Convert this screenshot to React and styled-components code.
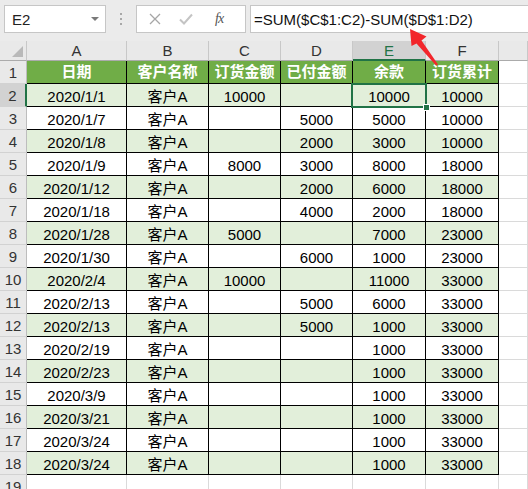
import React from "react";
import styled, { createGlobalStyle, css } from "styled-components";

const GREEN = "#217346";
const FONT = `"Liberation Sans", "Noto Sans CJK SC", sans-serif`;

const GlobalStyle = createGlobalStyle`
  html, body {
    margin: 0;
    padding: 0;
    background: #fff;
  }
  body {
    font-family: ${FONT};
  }
`;

const Root = styled.div`
  position: relative;
  width: 528px;
  height: 489px;
  overflow: hidden;
  background: #fff;
  font-family: ${FONT};
`;

const FormulaBar = styled.div`
  height: 41px;
  box-sizing: border-box;
  background: #ebebeb;
  display: flex;
  align-items: flex-start;
  padding-top: 5px;
  padding-left: 4px;
`;

const NameBox = styled.div`
  width: 102px;
  height: 28px;
  box-sizing: border-box;
  background: #fff;
  border: 1px solid #c6c6c6;
  display: flex;
  align-items: center;
  justify-content: space-between;
  padding: 0 6px 0 7px;
  font-size: 15px;
  color: #222;
`;

const DropTri = styled.span`
  width: 0;
  height: 0;
  border-left: 4px solid transparent;
  border-right: 4px solid transparent;
  border-top: 4px solid #7a7a7a;
`;

const Dots = styled.div`
  width: 30px;
  height: 28px;
  display: flex;
  flex-direction: column;
  align-items: center;
  justify-content: center;
  gap: 3px;
  span {
    width: 2px;
    height: 2px;
    background: #a8a8a8;
  }
`;

const FxBox = styled.div`
  width: 110px;
  height: 28px;
  box-sizing: border-box;
  background: #fff;
  border: 1px solid #c6c6c6;
  display: flex;
  align-items: center;
  padding-left: 12px;
  gap: 18px;
`;

const Fx = styled.span`
  font-family: "Liberation Serif", serif;
  font-style: italic;
  font-size: 14px;
  color: #555;
  margin-left: 4px;
  letter-spacing: -1px;
`;

const FormulaInput = styled.div`
  flex: 1;
  height: 28px;
  box-sizing: border-box;
  margin-left: 4px;
  background: #fff;
  border: 1px solid #c6c6c6;
  border-right: none;
  display: flex;
  align-items: center;
  padding-left: 3px;
  font-size: 15px;
  color: #111;
  white-space: nowrap;
`;

const Sheet = styled.div`
  display: grid;
  grid-template-columns: 27px 100px 82px 72px 72px 73px 73px 1fr;
  grid-template-rows: 20px repeat(19, 23px);
  font-size: 15px;
`;

const Corner = styled.div`
  position: relative;
  background: #e9e9e9;
  box-sizing: border-box;
  border-right: 1px solid #c8c8c8;
  border-bottom: 1px solid #ababab;
  &::after {
    content: "";
    position: absolute;
    right: 3px;
    bottom: 3px;
    width: 0;
    height: 0;
    border-left: 11px solid transparent;
    border-bottom: 11px solid #b9b9b9;
  }
`;

const ColHead = styled.div`
  box-sizing: border-box;
  background: #e9e9e9;
  border-right: 1px solid #c8c8c8;
  border-bottom: 1px solid #ababab;
  display: flex;
  align-items: center;
  justify-content: center;
  color: #333;
  ${(p) =>
    p.$selected &&
    css`
      background: #d2d2d2;
      color: ${GREEN};
      border-bottom: 2px solid ${GREEN};
    `}
`;

const RowHead = styled.div`
  box-sizing: border-box;
  background: #e9e9e9;
  border-right: 1px solid #bdbdbd;
  border-bottom: 1px solid #d2d2d2;
  display: flex;
  align-items: flex-end;
  justify-content: center;
  line-height: 20px;
  color: #333;
  ${(p) =>
    p.$selected &&
    css`
      background: #d2d2d2;
      border-right: 2px solid ${GREEN};
    `}
`;

const Cell = styled.div`
  position: relative;
  box-sizing: border-box;
  border-right: 1px solid #000;
  border-bottom: 1px solid #000;
  display: flex;
  align-items: flex-end;
  justify-content: center;
  line-height: 19px;
  white-space: nowrap;
  color: #000;
  background: ${(p) =>
    p.$tone === "head" ? "#70ad47" : p.$tone === "light" ? "#e2efda" : "#fff"};
  ${(p) =>
    p.$tone === "head" &&
    css`
      color: #fff;
      font-weight: bold;
      align-items: center;
      line-height: 20px;
    `}
  ${(p) =>
    p.$active &&
    css`
      z-index: 2;
      &::before {
        content: "";
        position: absolute;
        left: -2px;
        top: -1px;
        right: -2px;
        bottom: -2px;
        border: 2px solid ${GREEN};
      }
      &::after {
        content: "";
        position: absolute;
        right: -5px;
        bottom: -5px;
        width: 5px;
        height: 5px;
        background: ${GREEN};
        border: 1px solid #fff;
      }
    `}
`;

const Blank = styled.div`
  box-sizing: border-box;
  background: #fff;
  border-right: 1px solid #dadada;
  border-bottom: 1px solid #dadada;
`;

const Overlay = styled.svg`
  position: absolute;
  left: 0;
  top: 0;
  z-index: 5;
  pointer-events: none;
`;

const cols = ["A", "B", "C", "D", "E", "F"];
const headers = ["日期", "客户名称", "订货金额", "已付金额", "余款", "订货累计"];

const rows = [
  ["2020/1/1", "客户A", "10000", "", "10000", "10000"],
  ["2020/1/7", "客户A", "", "5000", "5000", "10000"],
  ["2020/1/8", "客户A", "", "2000", "3000", "10000"],
  ["2020/1/9", "客户A", "8000", "3000", "8000", "18000"],
  ["2020/1/12", "客户A", "", "2000", "6000", "18000"],
  ["2020/1/18", "客户A", "", "4000", "2000", "18000"],
  ["2020/1/28", "客户A", "5000", "", "7000", "23000"],
  ["2020/1/30", "客户A", "", "6000", "1000", "23000"],
  ["2020/2/4", "客户A", "10000", "", "11000", "33000"],
  ["2020/2/13", "客户A", "", "5000", "6000", "33000"],
  ["2020/2/13", "客户A", "", "5000", "1000", "33000"],
  ["2020/2/19", "客户A", "", "", "1000", "33000"],
  ["2020/2/23", "客户A", "", "", "1000", "33000"],
  ["2020/3/9", "客户A", "", "", "1000", "33000"],
  ["2020/3/21", "客户A", "", "", "1000", "33000"],
  ["2020/3/24", "客户A", "", "", "1000", "33000"],
  ["2020/3/24", "客户A", "", "", "1000", "33000"],
];

const CrossIcon = () => (
  <svg width="12" height="12" viewBox="0 0 12 12">
    <path d="M1 1L11 11M11 1L1 11" stroke="#a6a6a6" strokeWidth="1.3" />
  </svg>
);

const CheckIcon = () => (
  <svg width="14" height="12" viewBox="0 0 14 12">
    <path d="M1 6.5L5 10.5L13 1.5" stroke="#c4c4c4" strokeWidth="2" fill="none" />
  </svg>
);

export default function App() {
  return (
    <Root>
      <GlobalStyle />
      <FormulaBar>
        <NameBox>
          E2
          <DropTri />
        </NameBox>
        <Dots>
          <span />
          <span />
          <span />
        </Dots>
        <FxBox>
          <CrossIcon />
          <CheckIcon />
          <Fx>fx</Fx>
        </FxBox>
        <FormulaInput>=SUM($C$1:C2)-SUM($D$1:D2)</FormulaInput>
      </FormulaBar>
      <Sheet>
        <Corner />
        {cols.map((c) => (
          <ColHead key={c} $selected={c === "E"}>
            {c}
          </ColHead>
        ))}
        <ColHead />

        <RowHead>1</RowHead>
        {headers.map((h) => (
          <Cell key={h} $tone="head">
            {h}
          </Cell>
        ))}
        <Blank />

        {rows.map((r, i) => {
          const n = i + 2;
          const tone = n % 2 === 0 ? "light" : "white";
          return (
            <React.Fragment key={n}>
              <RowHead $selected={n === 2}>{n}</RowHead>
              {r.map((v, j) => (
                <Cell key={j} $tone={tone} $active={n === 2 && j === 4}>
                  {v}
                </Cell>
              ))}
              <Blank />
            </React.Fragment>
          );
        })}

        <RowHead>19</RowHead>
        {cols.map((c) => (
          <Blank key={c} />
        ))}
        <Blank />
      </Sheet>
      <Overlay width="528" height="489" viewBox="0 0 528 489">
        <polygon
          points="410,29 426.5,36.5 421.5,40.5 438,64.5 436,65.5 416.5,43.5 411.5,46"
          fill="#f2262b"
        />
      </Overlay>
    </Root>
  );
}
